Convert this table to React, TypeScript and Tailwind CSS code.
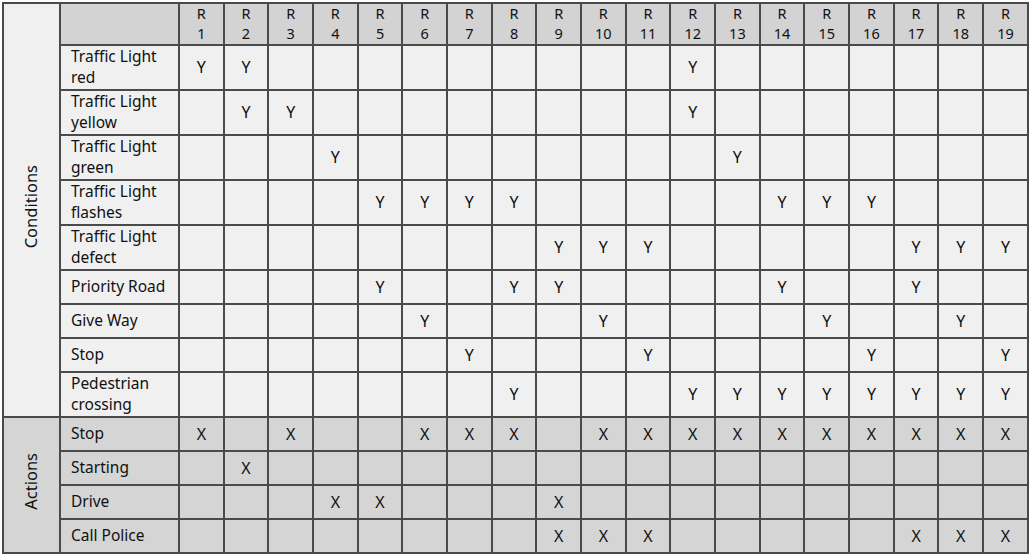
import React from 'react';

type Row = { label: string[]; marks: number[] };

const conditions: Row[] = [
  { label: ['Traffic Light', 'red'], marks: [1, 2, 12] },
  { label: ['Traffic Light', 'yellow'], marks: [2, 3, 12] },
  { label: ['Traffic Light', 'green'], marks: [4, 13] },
  { label: ['Traffic Light', 'flashes'], marks: [5, 6, 7, 8, 14, 15, 16] },
  { label: ['Traffic Light', 'defect'], marks: [9, 10, 11, 17, 18, 19] },
  { label: ['Priority Road'], marks: [5, 8, 9, 14, 17] },
  { label: ['Give Way'], marks: [6, 10, 15, 18] },
  { label: ['Stop'], marks: [7, 11, 16, 19] },
  { label: ['Pedestrian', 'crossing'], marks: [8, 12, 13, 14, 15, 16, 17, 18, 19] },
];

const actions: Row[] = [
  { label: ['Stop'], marks: [1, 3, 6, 7, 8, 10, 11, 12, 13, 14, 15, 16, 17, 18, 19] },
  { label: ['Starting'], marks: [2] },
  { label: ['Drive'], marks: [4, 5, 9] },
  { label: ['Call Police'], marks: [9, 10, 11, 17, 18, 19] },
];

const rules = Array.from({ length: 19 }, (_, i) => i + 1);

const cell = 'border-2 border-[#4a4a4a] p-0';

const Section: React.FC<{ title: string; rows: Row[]; mark: string; dark: boolean }> = ({ title, rows, mark, dark }) => {
  const bg = dark ? 'bg-[#d5d5d5]' : 'bg-[#f0f0f0]';
  return (
    <>
      {rows.map((row, i) => (
        <tr key={row.label.join(' ')} className={row.label.length > 1 ? 'h-[45px]' : 'h-[34px]'}>
          {i === 0 && dark && (
            <td rowSpan={rows.length} className={`${cell} ${bg} text-center`}>
              <span className="inline-block [writing-mode:vertical-rl] rotate-180 text-[16.5px]">{title}</span>
            </td>
          )}
          <td className={`${cell} ${bg} pl-[10px] text-left text-[15.5px] leading-[21px]`}>
            {row.label.map((l) => (
              <div key={l}>{l}</div>
            ))}
          </td>
          {rules.map((r) => (
            <td key={r} className={`${cell} ${bg} text-center`}>
              {row.marks.includes(r) ? mark : ''}
            </td>
          ))}
        </tr>
      ))}
    </>
  );
};

const App: React.FC = () => {
  return (
    <div className="min-h-screen bg-white pl-[2px] pt-[2px] font-['Noto_Sans',sans-serif] text-[16px] text-[#111]">
      <table className="table-fixed border-collapse w-[1027px]">
        <colgroup>
          <col className="w-[57px]" />
          <col className="w-[119px]" />
          {rules.map((r) => (
            <col key={r} />
          ))}
        </colgroup>
        <tbody>
          <tr className="h-[41px]">
            <td rowSpan={conditions.length + 1} className={`${cell} bg-[#f0f0f0] text-center`}>
              <span className="inline-block [writing-mode:vertical-rl] rotate-180 text-[16.5px]">Conditions</span>
            </td>
            <td className={`${cell} bg-[#d3d3d3]`} />
            {rules.map((r) => (
              <td key={r} className={`${cell} bg-[#d3d3d3] text-center text-[14.5px] leading-[19.75px]`}>
                <div>R</div>
                <div>{r}</div>
              </td>
            ))}
          </tr>
          <Section title="Conditions" rows={conditions} mark="Y" dark={false} />
          <Section title="Actions" rows={actions} mark="X" dark />
        </tbody>
      </table>
    </div>
  );
};

export default App;
